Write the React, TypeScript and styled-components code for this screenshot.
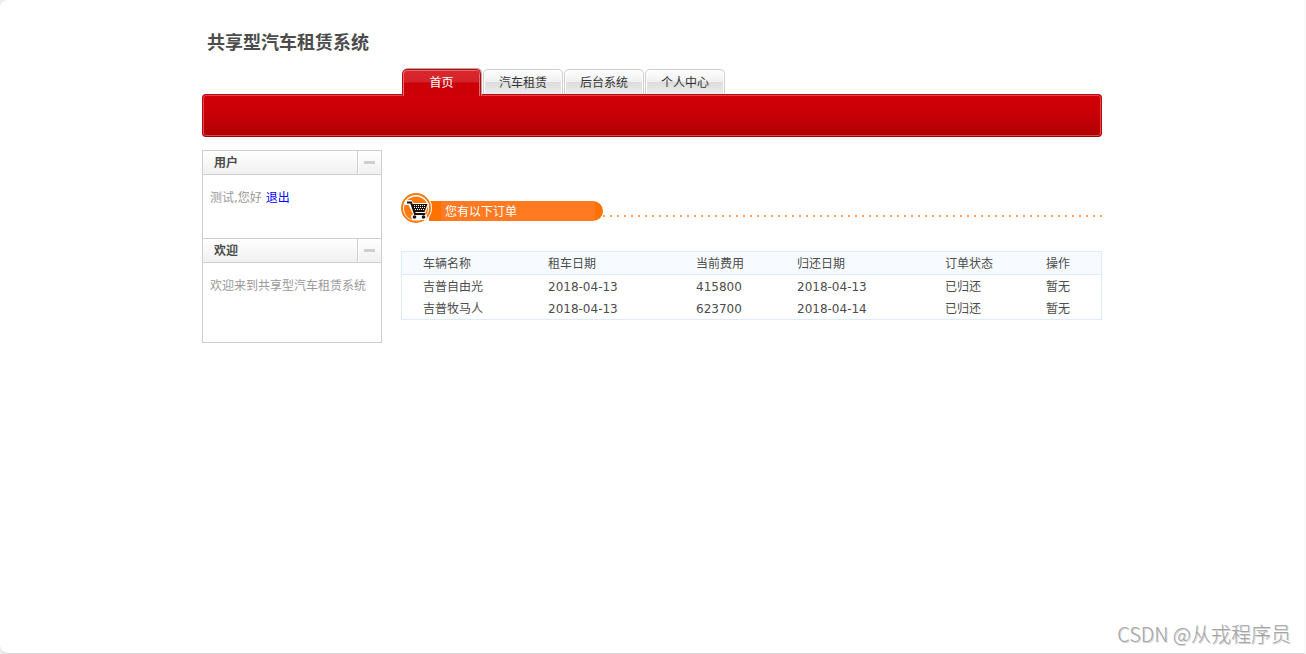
import React, { useState } from "react";
import styled, { createGlobalStyle, css } from "styled-components";

const GlobalStyle = createGlobalStyle`
  * { box-sizing: border-box; }
  body {
    margin: 0;
    background: #eeeeee;
    color: #4c4c4c;
    font: 12px/18px "DejaVu Sans", "Noto Sans CJK SC", sans-serif;
  }
`;

const Page = styled.div`
  position: relative;
  min-height: 100vh;
  background: #fff;
  border-right: 2px solid #fafafa;
  border-bottom: 1px solid #d6d6d6;
  border-radius: 8px 0 0 8px;
`;

const Container = styled.div`
  max-width: 900px;
  margin: 0 auto;
`;

const Brand = styled.h1`
  margin: 0;
  padding: 29px 5px 16px;
  font: bold 18px/24px "Noto Sans CJK SC", sans-serif;
`;

const Tabs = styled.nav`
  display: flex;
  gap: 1px;
  padding-left: 200px;
`;

const Tab = styled.a<{ $active?: boolean }>`
  min-width: 80px;
  height: 25px;
  padding: 0 15px;
  border: 1px solid #cfcfcf;
  border-bottom: 0;
  border-radius: 5px 5px 0 0;
  background: linear-gradient(#ffffff, #f0f0f0 48%, #dcdcdc 50%, #ececec);
  box-shadow: inset 1px 1px 0 #fff, inset -1px 0 0 #fff;
  color: #333;
  line-height: 27px;
  text-align: center;
  text-decoration: none;

  ${({ $active }) =>
    $active &&
    css`
      position: relative;
      min-width: 79px;
      height: 27px;
      margin: 0 1px -2px 0;
      border-color: #c9000b;
      background: linear-gradient(#d9262c, #d4242a 46%, #cc0007 50%, #cd0006);
      box-shadow: inset 1px 1px 0 #e4696d, inset -1px 0 0 #e4696d, 1px -1px 0 #ababab;
      color: #fff;
    `}
`;

const Banner = styled.div`
  height: 43px;
  border: 1px solid #c5000b;
  border-bottom-color: #9f0008;
  border-radius: 4px;
  background: linear-gradient(#d10007, #c90006 40%, #b00004);
  box-shadow: inset 0 0 0 1px #d84a50;
`;

const Columns = styled.div`
  display: grid;
  grid-template-columns: 180px 1fr;
  gap: 19px;
  align-items: start;
  padding-top: 13px;
`;

const Sidebar = styled.aside`
  border: 1px solid #cfcfcf;
  border-top: 0;
`;

const PanelHead = styled.div`
  display: flex;
  height: 25px;
  border: solid #cfcfcf;
  border-width: 1px 0;
  background: linear-gradient(#fff, #f0f0f0);
`;

const PanelTitle = styled.h2`
  flex: 1;
  margin: 0;
  padding-left: 11px;
  font-size: 12px;
  line-height: 25px;
`;

const Toggle = styled.button`
  display: grid;
  place-items: center;
  width: 24px;
  padding: 0;
  border: 0;
  border-left: 1px solid #cfcfcf;
  background: none;
  box-shadow: inset 1px 1px 0 #fff;
  cursor: pointer;
`;

const Minus = styled.span`
  width: 11px;
  height: 3px;
  background: #cfcfcf;
`;

const PanelBody = styled.div<{ $tall?: boolean }>`
  min-height: ${({ $tall }) => ($tall ? 79 : 63)}px;
  padding: 14px 7px;
  color: #999;

  a {
    color: #0000ff;
    text-decoration: none;
  }
`;

const Main = styled.main`
  padding-top: 43px;
`;

const SectionHead = styled.div`
  display: flex;
  align-items: center;
  height: 32px;
  margin-bottom: 26px;
`;

const CartIcon = styled.svg`
  position: relative;
  flex: none;
  width: 32px;
  height: 32px;
`;

const SectionTitle = styled.h2`
  width: 174px;
  height: 20px;
  margin: 4px 0 0 -4px;
  padding-left: 16px;
  border-radius: 0 10px 10px 0;
  background: linear-gradient(90deg, #ff7200 12px, #ff7a20 12px, #ff7a20 166px, #ff7200 166px);
  color: #fff;
  font-size: 12px;
  font-weight: normal;
  line-height: 22px;
`;

const Dots = styled.div`
  flex: 1;
  height: 2px;
  margin-top: 13px;
  background: repeating-linear-gradient(90deg, #ffa35c 0 2px, transparent 2px 7px);
`;

const Table = styled.table`
  width: 100%;
  table-layout: fixed;
  border: 1px solid #dcecfb;
  border-spacing: 0;

  th,
  td {
    height: 22px;
    padding: 2px 0 0 21px;
    font-weight: normal;
    line-height: 20px;
    text-align: left;
    white-space: nowrap;
  }

  th {
    height: 23px;
    border-bottom: 1px solid #dcecfb;
    background: #f7fbff;
  }
`;

const Col = styled.col<{ $w?: number }>`
  width: ${({ $w }) => ($w ? `${$w}px` : "auto")};
`;

const Watermark = styled.div`
  position: absolute;
  right: 13px;
  bottom: 5px;
  color: #a4a4a4;
  font: 300 20px/28px "Noto Sans CJK SC", sans-serif;
  text-shadow: 1px 1px 0 #d4d4d4;
`;

const tabs = ["首页", "汽车租赁", "后台系统", "个人中心"];

const columns = [
  { label: "车辆名称", width: 125 },
  { label: "租车日期", width: 148 },
  { label: "当前费用", width: 101 },
  { label: "归还日期", width: 148 },
  { label: "订单状态", width: 101 },
  { label: "操作" },
];

const orders = [
  ["吉普自由光", "2018-04-13", "415800", "2018-04-13", "已归还", "暂无"],
  ["吉普牧马人", "2018-04-13", "623700", "2018-04-14", "已归还", "暂无"],
];

function Panel({ title, tall, children }: { title: string; tall?: boolean; children: React.ReactNode }) {
  const [open, setOpen] = useState(true);
  return (
    <section>
      <PanelHead>
        <PanelTitle>{title}</PanelTitle>
        <Toggle type="button" aria-label={title} aria-expanded={open} onClick={() => setOpen(!open)}>
          <Minus />
        </Toggle>
      </PanelHead>
      {open && <PanelBody $tall={tall}>{children}</PanelBody>}
    </section>
  );
}

function Cart() {
  return (
    <CartIcon viewBox="0 0 32 32" aria-hidden="true">
      <circle cx="15" cy="15" r="16" fill="#fff" />
      <circle cx="15" cy="15" r="14" fill="#fff" stroke="#ff7a10" strokeWidth="2" />
      <circle cx="15" cy="15.5" r="12" fill="#ff7a10" />
      <path d="M4 7h6.500l2 3H28l-4 11 2 2-1 4H11l-1-4 2-2L7.500 12H4z" fill="#fff" />
      <path d="M6 9.500h4l4 11.500h10" fill="none" stroke="#1c1008" strokeWidth="2" />
      <path d="M11 11h15.500l-3 8H13.600z" fill="#1c1008" />
      <path d="M13 12.500h12M13 14.500h11M14 16.500h9" stroke="#fff" strokeWidth="1" strokeDasharray="1 1" />
      <circle cx="13.500" cy="24" r="1.800" fill="#1c1008" />
      <circle cx="22.500" cy="24" r="1.800" fill="#1c1008" />
    </CartIcon>
  );
}

export default function App() {
  return (
    <>
      <GlobalStyle />
      <Page>
        <Container>
          <header>
            <Brand>共享型汽车租赁系统</Brand>
            <Tabs>
              {tabs.map((label, i) => (
                <Tab key={label} href="#" $active={i === 0}>
                  {label}
                </Tab>
              ))}
            </Tabs>
            <Banner />
          </header>
          <Columns>
            <Sidebar>
              <Panel title="用户">
                测试,您好 <a href="#">退出</a>
              </Panel>
              <Panel title="欢迎" tall>
                欢迎来到共享型汽车租赁系统
              </Panel>
            </Sidebar>
            <Main>
              <SectionHead>
                <Cart />
                <SectionTitle>您有以下订单</SectionTitle>
                <Dots />
              </SectionHead>
              <Table>
                <colgroup>
                  {columns.map((c) => (
                    <Col key={c.label} $w={c.width} />
                  ))}
                </colgroup>
                <thead>
                  <tr>
                    {columns.map((c) => (
                      <th key={c.label} scope="col">
                        {c.label}
                      </th>
                    ))}
                  </tr>
                </thead>
                <tbody>
                  {orders.map((row) => (
                    <tr key={row[0]}>
                      {row.map((cell, i) => (
                        <td key={i}>{cell}</td>
                      ))}
                    </tr>
                  ))}
                </tbody>
              </Table>
            </Main>
          </Columns>
        </Container>
        <Watermark>CSDN @从戎程序员</Watermark>
      </Page>
    </>
  );
}
